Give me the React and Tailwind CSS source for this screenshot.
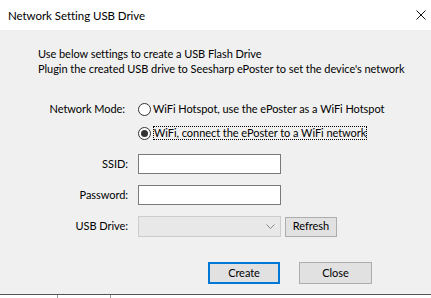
import React from "react";

function Radio({ checked }) {
  return (
    <span className="relative inline-block w-[13px] h-[13px] rounded-full border border-[#333333] bg-white shrink-0">
      {checked && (
        <span className="absolute left-[2px] top-[2px] w-[7px] h-[7px] rounded-full bg-[#333333]" />
      )}
    </span>
  );
}

export default function App() {
  return (
    <div
      className="w-[431px] h-[298px] bg-white text-[11px] tracking-[-0.05px] text-black flex flex-col overflow-hidden"
      style={{ fontFamily: 'Lato, "Noto Sans", sans-serif' }}
    >
      <div className="h-[30px] bg-white flex items-center justify-between pl-[8px] pr-[4px] shrink-0">
        <span className="leading-[15px] text-[11.5px]">Network Setting USB Drive</span>
        <svg width="12" height="12" viewBox="0 0 12 12">
          <path d="M1.5 1.5 L10.5 10.5 M10.5 1.5 L1.5 10.5" stroke="#111" strokeWidth="1" />
        </svg>
      </div>
      <div className="h-[265px] bg-[#f0f0f0] border-b border-[#555555] flex flex-col pt-[16px] shrink-0">
        <div className="pl-[38px] leading-[15px]">
          <div>Use below settings to create a USB Flash Drive</div>
          <div>Plugin the created USB drive to Seesharp ePoster to set the device's network</div>
        </div>
        <div className="mt-[23px] flex h-[20px] items-center">
          <div className="w-[125px] text-right">Network Mode:</div>
          <div className="ml-[13px] flex items-center gap-[2px]">
            <Radio />
            <span>WiFi Hotspot, use the ePoster as a WiFi Hotspot</span>
          </div>
        </div>
        <div className="mt-[4px] flex h-[20px] items-center">
          <div className="w-[125px]" />
          <div className="ml-[13px] flex items-center gap-[2px]">
            <Radio checked />
            <span className="border border-dotted border-black leading-[12px] h-[14px] px-0">
              WiFi, connect the ePoster to a WiFi network
            </span>
          </div>
        </div>
        <div className="mt-[11px] flex h-[20px] items-center">
          <div className="w-[128px] text-right">SSID:</div>
          <div className="ml-[10px] w-[143px] h-[20px] bg-white border border-[#7a7a7a]" />
        </div>
        <div className="mt-[11px] flex h-[20px] items-center">
          <div className="w-[128px] text-right">Password:</div>
          <div className="ml-[10px] w-[143px] h-[20px] bg-white border border-[#7a7a7a]" />
        </div>
        <div className="mt-[11px] flex h-[21px] items-center">
          <div className="w-[128px] text-right">USB Drive:</div>
          <div className="ml-[10px] w-[143px] h-[21px] bg-[#e8e8e8] border border-[#cccccc] flex items-center justify-end pr-[5px]">
            <svg width="9" height="6" viewBox="0 0 9 6">
              <path d="M0.5 0.5 L4.5 4.5 L8.5 0.5" stroke="#888" strokeWidth="1" fill="none" />
            </svg>
          </div>
          <div className="ml-[4px] w-[52px] h-[20px] bg-[#e1e1e1] border border-[#adadad] flex items-center justify-center">
            Refresh
          </div>
        </div>
        <div className="mt-[25px] flex h-[22px] items-center pl-[208px] gap-[19px]">
          <div className="w-[72px] h-[22px] bg-[#e1e1e1] border-2 border-[#0078d7] flex items-center justify-center">
            Create
          </div>
          <div className="w-[73px] h-[22px] bg-[#e1e1e1] border border-[#adadad] flex items-center justify-center">
            Close
          </div>
        </div>
      </div>
      <div className="flex-1 bg-white flex">
        <div className="ml-[57px] w-px bg-[#999999]" />
        <div className="ml-[52px] w-px bg-[#999999]" />
      </div>
    </div>
  );
}
